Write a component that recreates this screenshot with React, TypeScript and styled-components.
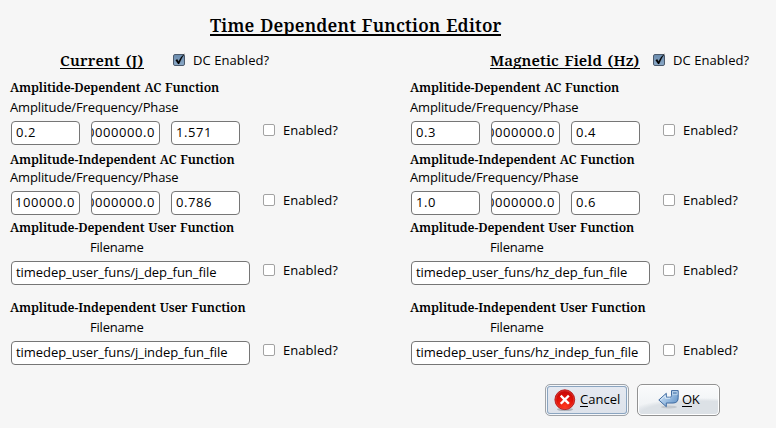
import React from "react";
import styled, { createGlobalStyle } from "styled-components";

const Global = createGlobalStyle`
  * { box-sizing: border-box; }
  body { margin: 0; background: #f6f6f6; color: #000; }
`;

const sans = `"Open Sans", "Noto Sans", "DejaVu Sans", sans-serif`;
const serif = `"Noto Serif", "DejaVu Serif Condensed", "DejaVu Serif", serif`;

const Dialog = styled.main`
  width: 776px;
  height: 428px;
  padding-top: 11px;
  background: #f6f6f6;
  font: 13px/18px ${sans};
  white-space: nowrap;
  overflow: hidden;
`;

const Title = styled.h1`
  width: 291px;
  height: 25px;
  margin: 0 0 12px 210px;
  border-bottom: 2px solid #000;
  font: 600 17.5px/28px ${serif};
  letter-spacing: 0.16px;
  word-spacing: 1px;
`;

const Columns = styled.div`
  display: grid;
  grid-template-columns: 400px 376px;
`;

const Column = styled.section`
  display: flex;
  flex-direction: column;
  padding-left: 10px;
`;

const Header = styled.header<{ $indent: number; $gap: number }>`
  display: flex;
  height: 30px;
  padding-left: ${(p) => p.$indent}px;
  gap: ${(p) => p.$gap}px;
`;

const HeaderTitle = styled.h2<{ $width: number; $track: number }>`
  width: ${(p) => p.$width}px;
  height: 21px;
  margin: 0;
  border-bottom: 1px solid #000;
  font: 600 15px/24px ${serif};
  letter-spacing: ${(p) => p.$track}px;
  word-spacing: 1.5px;
`;

const HeaderCheck = styled.div`
  padding-top: 3px;
`;

const Group = styled.div<{ $before: number }>`
  margin-top: ${(p) => p.$before}px;
`;

const GroupTitle = styled.h3`
  height: 18px;
  margin: 0;
  font: 600 12.5px/20px ${serif};
  letter-spacing: -0.13px;
  word-spacing: 0.7px;
`;

const Caption = styled.div<{ $gap: number; $indent?: number; $track: number }>`
  height: 18px;
  margin-top: ${(p) => p.$gap}px;
  padding-left: ${(p) => p.$indent ?? 0}px;
  letter-spacing: ${(p) => p.$track}px;
`;

const FieldRow = styled.div`
  display: flex;
  height: 24px;
  margin: 5px 0 0 1px;
`;

const Fields = styled.div`
  display: flex;
  gap: 11px;
  width: 252px;
`;

const Field = styled.div<{ $width: number; $end?: boolean; $track: number }>`
  display: flex;
  justify-content: ${(p) => (p.$end ? "flex-end" : "flex-start")};
  width: ${(p) => p.$width}px;
  height: 24px;
  padding: 1px 4px 0;
  border: 1px solid #767676;
  border-radius: 4px;
  background: #fff;
  line-height: 18px;
  letter-spacing: ${(p) => p.$track}px;
  overflow: hidden;
`;

const CheckLabel = styled.label`
  display: flex;
  align-items: center;
  gap: 8px;
  height: 18px;
  letter-spacing: 0.06px;
`;

const Box = styled.span<{ $on?: boolean }>`
  width: 12px;
  height: 12px;
  border: 1px solid ${(p) => (p.$on ? "#4c5a6c" : "#a2a2a2")};
  border-radius: 2px;
  background: ${(p) => (p.$on ? "linear-gradient(#6b8cae, #8aa8c6)" : "#fff")};
`;

const CheckMark = styled.svg`
  display: block;
  margin: -2px 0 0 -1px;
  overflow: visible;
`;

const Actions = styled.footer`
  display: flex;
  gap: 8px;
  margin: 19px 0 0 545px;
`;

const Button = styled.button<{ $focused?: boolean }>`
  display: flex;
  align-items: flex-start;
  width: ${(p) => (p.$focused ? 84 : 83)}px;
  height: 32px;
  margin: 0;
  padding: ${(p) => (p.$focused ? "4px 0 0 8px" : "4px 0 0 20px")};
  border: 1px solid ${(p) => (p.$focused ? "#a0a4a9" : "#929292")};
  border-radius: 5px;
  background: ${(p) =>
    p.$focused
      ? "linear-gradient(#e5e9f1, #dde2ea)"
      : "radial-gradient(ellipse 75px 17px at 78% 100%, #dce1e6 0 82%, transparent 100%), linear-gradient(#fafbfc, #eceff2)"};
  box-shadow: ${(p) =>
    p.$focused ? "inset 0 0 0 1px #f5f7fa, inset 0 0 0 2px #8ba5c0" : "inset 0 0 0 1px #fff"};
  color: #000;
  font: 13px/18px ${sans};
`;

const ButtonText = styled.span<{ $left: number; $track: number }>`
  padding-top: 1px;
  margin-left: ${(p) => p.$left}px;
  letter-spacing: ${(p) => p.$track}px;
`;

const Mnemonic = styled.span`
  display: inline-block;
  height: 17px;
  border-bottom: 1px solid #000;
  vertical-align: top;
`;

function Check({ text, on }: { text: string; on?: boolean }) {
  return (
    <CheckLabel>
      <Box $on={on}>
        {on && (
          <CheckMark width="12" height="13" viewBox="0 0 12 13">
            <path d="M2.6 7.2 4.2 6.2 5.5 8.4Q7.5 3.8 11.6 0.8 8.3 5.2 6.1 10.9H5.1Z" fill="#000" stroke="#000" strokeWidth=".2" />
          </CheckMark>
        )}
      </Box>
      {text}
    </CheckLabel>
  );
}

function AcGroup({ title, values, before, gap }: { title: string; values: string[]; before: number; gap: number }) {
  return (
    <Group $before={before}>
      <GroupTitle>{title}</GroupTitle>
      <Caption $gap={gap} $track={-0.14}>Amplitude/Frequency/Phase</Caption>
      <FieldRow>
        <Fields>
          {values.map((v, i) => (
            <Field key={i} $width={69} $end={v.length > 7} $track={0.56}>{v}</Field>
          ))}
        </Fields>
        <Check text="Enabled?" />
      </FieldRow>
    </Group>
  );
}

function UserGroup({ title, file, before }: { title: string; file: string; before: number }) {
  return (
    <Group $before={before}>
      <GroupTitle>{title}</GroupTitle>
      <Caption $gap={2} $indent={80} $track={-0.2}>Filename</Caption>
      <FieldRow>
        <Fields>
          <Field $width={239} $track={-0.05}>{file}</Field>
        </Fields>
        <Check text="Enabled?" />
      </FieldRow>
    </Group>
  );
}

interface Source {
  name: string;
  indent: number;
  width: number;
  gap: number;
  track: number;
  dependent: string[];
  independent: string[];
  files: [string, string];
}

const sources: Source[] = [
  {
    name: "Current (J)", indent: 50, width: 84, gap: 29, track: 0.2,
    dependent: ["0.2", "10000000.0", "1.571"],
    independent: ["100000.0", "10000000.0", "0.786"],
    files: ["timedep_user_funs/j_dep_fun_file", "timedep_user_funs/j_indep_fun_file"],
  },
  {
    name: "Magnetic Field (Hz)", indent: 80, width: 150, gap: 13, track: 0.1,
    dependent: ["0.3", "10000000.0", "0.4"],
    independent: ["1.0", "10000000.0", "0.6"],
    files: ["timedep_user_funs/hz_dep_fun_file", "timedep_user_funs/hz_indep_fun_file"],
  },
];

export default function App() {
  return (
    <Dialog>
      <Global />
      <Title>Time Dependent Function Editor</Title>
      <Columns>
        {sources.map((s) => (
          <Column key={s.name}>
            <Header $indent={s.indent} $gap={s.gap}>
              <HeaderTitle $width={s.width} $track={s.track}>{s.name}</HeaderTitle>
              <HeaderCheck><Check text="DC Enabled?" on /></HeaderCheck>
            </Header>
            <AcGroup title="Amplitide-Dependent AC Function" values={s.dependent} before={0} gap={2} />
            <AcGroup title="Amplitude-Independent AC Function" values={s.independent} before={5} gap={0} />
            <UserGroup title="Amplitude-Dependent User Function" file={s.files[0]} before={3} />
            <UserGroup title="Amplitude-Independent User Function" file={s.files[1]} before={13} />
          </Column>
        ))}
      </Columns>
      <Actions>
        <Button $focused>
          <svg width="22" height="23" viewBox="0 0 22 23">
            <defs>
              <radialGradient id="red" cx=".5" cy=".85" r=".8">
                <stop offset="0" stopColor="#ff3a20" />
                <stop offset=".6" stopColor="#e01008" />
                <stop offset="1" stopColor="#c20a0a" />
              </radialGradient>
            </defs>
            <ellipse cx="11" cy="20.5" rx="8" ry="1.6" fill="#8d929a" opacity=".6" />
            <circle cx="10.8" cy="10.7" r="9.9" fill="url(#red)" stroke="#b5191b" strokeWidth=".9" />
            <circle cx="10.8" cy="10.7" r="9" fill="none" stroke="#e8483e" strokeWidth=".6" />
            <path d="m7.6 7.5 6.4 6.4m0-6.4-6.4 6.4" stroke="#fff" strokeWidth="2.4" strokeLinecap="square" />
          </svg>
          <ButtonText $left={4} $track={0}><Mnemonic>C</Mnemonic>ancel</ButtonText>
        </Button>
        <Button>
          <svg width="22" height="22" viewBox="0 0 22 22">
            <defs>
              <linearGradient id="blue" x1="0" y1="0" x2="1" y2=".6">
                <stop offset="0" stopColor="#d5e7f8" />
                <stop offset=".5" stopColor="#a3c4e6" />
                <stop offset="1" stopColor="#6c9acb" />
              </linearGradient>
            </defs>
            <ellipse cx="11" cy="18" rx="8" ry="1.5" fill="#a9afb6" opacity=".5" />
            <path d="M.8 11 8.3 4.3v3.9h3.4c1.4 0 1.8-.6 1.8-1.8V1.6h6.7v7.1c0 3.6-1.8 5.3-5.2 5.3H8.3v3.7Z" fill="url(#blue)" stroke="#3f6ba1" strokeWidth="1" strokeLinejoin="round" />
            <path d="M14.5 2.6h4.7v3h-4.7Z" fill="#7199c5" stroke="#cfe2f5" strokeWidth=".7" />
            <path d="m2.4 10.9 4.9-4.3v2.6h4.9" fill="none" stroke="#f0f7fe" strokeWidth=".8" />
          </svg>
          <ButtonText $left={2} $track={-0.5}><Mnemonic>O</Mnemonic>K</ButtonText>
        </Button>
      </Actions>
    </Dialog>
  );
}
